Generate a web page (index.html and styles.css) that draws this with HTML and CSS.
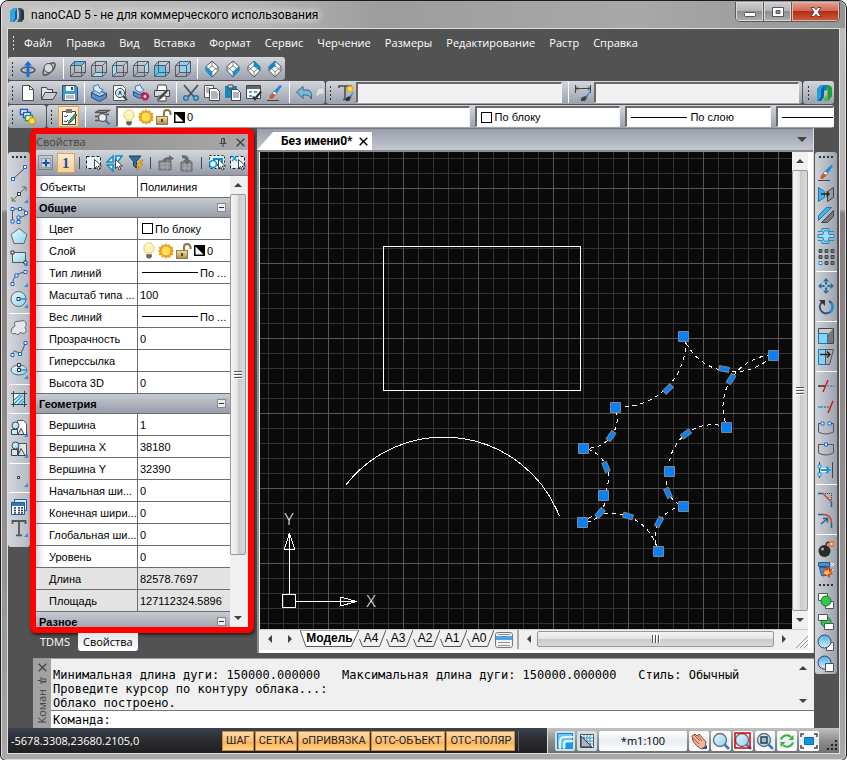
FILE: index.html
```html
<!DOCTYPE html>
<html lang="ru">
<head>
<meta charset="utf-8">
<title>nanoCAD 5 - не для коммерческого использования</title>
<link rel="stylesheet" href="styles.css">
</head>
<body>
<svg class="defs" aria-hidden="true">
  <defs>
    <linearGradient id="sky" x1="0" y1="0" x2="1" y2="1"><stop offset="0" stop-color="#e8f7fd"/><stop offset="1" stop-color="#8fd3f0"/></linearGradient>
    <linearGradient id="ball" x1="0" y1="0" x2="0" y2="1"><stop offset="0" stop-color="#49b1e8"/><stop offset="1" stop-color="#d4f0fc"/></linearGradient>
    <linearGradient id="gold" x1="0" y1="0" x2="0" y2="1"><stop offset="0" stop-color="#f3dfb4"/><stop offset="1" stop-color="#a98a4e"/></linearGradient>
  </defs>
  <symbol id="cube" viewBox="0 0 18 18"><path d="M1.500 5.500h11v11h-11zM5.500 1.500h11v11h-11zM1.500 5.500l4-4M12.500 5.500l4-4M12.500 16.500l4-4M1.500 16.500l4-4" fill="none" stroke="#555c63"/></symbol>
  <symbol id="gem" viewBox="0 0 18 18"><path d="M9 1l6 5.500v4L9 17l-6-6.500v-4z" fill="#fff" stroke="#555" stroke-width="1"/><path d="M3 6.500l6 5.500 6-5.500M9 12v5M9 1v5M9 6l-6 4.500M9 6l6 4.500" fill="none" stroke="#666" stroke-width=".8"/></symbol>
  <symbol id="bulb" viewBox="0 0 14 18"><circle cx="7" cy="6.500" r="5.500" fill="#fff3b0" stroke="#e9c66b"/><path d="M4 11h6v2H4z" fill="#f5e09a"/><path d="M4 13h6v3l-2 1.500H6L4 16z" fill="#666"/><path d="M5 4q2-2 3 0" stroke="#fff" fill="none" stroke-width="2"/></symbol>
  <symbol id="sun" viewBox="0 0 16 16"><path d="M8 0l1.600 2.200L12 1.200l.6 2.600 2.700.2-.8 2.500L16 8l-1.500 1.600.8 2.500-2.700.3-.6 2.500-2.400-1L8 16l-1.600-2.200-2.400 1-.6-2.500-2.700-.2.800-2.500L0 8l1.500-1.600L.7 4l2.700-.2.600-2.600 2.400 1z" fill="#e9a21b"/><circle cx="8" cy="8" r="5" fill="#ffdf57" stroke="#e8a020"/></symbol>
  <symbol id="lock" viewBox="0 0 16 16"><path d="M8 7V4q0-3 3-3t3.500 3v2" fill="none" stroke="#8a7443" stroke-width="2"/><rect x=".5" y="7.500" width="11" height="8" fill="url(#gold)" stroke="#9a7c40"/><path d="M6 10v3" stroke="#5a4520" stroke-width="2"/></symbol>
  <symbol id="swatch" viewBox="0 0 11 11"><path d="M0 0h11v11H0z" fill="#000"/><path d="M1.500 1.500v8h8z" fill="#fff"/></symbol>
  <symbol id="lens" viewBox="0 0 18 18"><path d="M12 12l5 5" stroke="#2d7fc4" stroke-width="2.500"/><circle cx="8" cy="8" r="6.500" fill="url(#sky)" stroke="#68727c" stroke-width="1.400"/></symbol>
  <symbol id="brush" viewBox="0 0 18 18"><path d="M16 2l-5 7-3-2 6-6z" fill="#1f8be0"/><path d="M8 7l3 2-1.500 2.500-3.500-2z" fill="#fff" stroke="#778"/><path d="M6 9.500l3.500 2L6 15l-3-.5 1-3z" fill="#c9602c"/><path d="M1 16.500h12" stroke="#444"/></symbol>
  <symbol id="cursor" viewBox="0 0 8 12"><path d="M.5.500v9l2.200-2 1.500 3.500 1.600-.7-1.500-3.300H7.500z" fill="#fff" stroke="#333" stroke-width=".9"/></symbol>
  <symbol id="pin" viewBox="0 0 8 9"><path d="M2.500 5V.500h3V5M5 1v4M.5 5.500h7M4 6v3" fill="none" stroke="currentColor"/></symbol>
  <symbol id="cross" viewBox="0 0 9 9"><path d="M.7.700l7.600 7.600M8.300.700L.7 8.300" stroke="currentColor" stroke-width="1.400"/></symbol>
  <symbol id="more" viewBox="0 0 4 4"><path d="M4 0v4H0z" fill="#2b8be8"/></symbol>
</svg>

<div class="window">
  <header class="titlebar">
    <svg class="logo" viewBox="0 0 16 16"><path d="M1 4l4-3h3v11l-3 3H1z" fill="#0c5fae"/><path d="M1 4l4-3h3L6 5v7l-2 3H1z" fill="#2fa6df"/><path d="M9 1h3q3 1 3 4v7l-3 3H8l2-4V5z" fill="#47525b"/><path d="M12 2q3 1 3 3v7l-3 3z" fill="#2c343a"/></svg>
    <h1>nanoCAD 5 - не для коммерческого использования</h1>
    <div class="winbtns">
      <button aria-label="Свернуть"><svg viewBox="0 0 14 12"><rect x="1.500" y="6.500" width="11" height="4" rx="1" fill="#fff" stroke="#545663"/></svg></button>
      <button aria-label="Развернуть"><svg viewBox="0 0 14 12"><path d="M1.500 1.500h11v9h-11zM5 4.500v3h4v-3z" fill="#fff" fill-rule="evenodd" stroke="#545663"/></svg></button>
      <button class="close" aria-label="Закрыть"><svg viewBox="0 0 14 12"><path d="M2 1.500h3.200L7 3.800l1.800-2.300H12L9 6l3 4.500H8.800L7 8.200l-1.800 2.300H2L5 6z" fill="#fff" stroke="#5b3a3e" stroke-width=".9"/></svg></button>
    </div>
  </header>

  <div class="app">
    <nav class="menu">
      <span class="grip"></span>
      <a href="#">Файл</a><a href="#">Правка</a><a href="#">Вид</a><a href="#">Вставка</a><a href="#">Формат</a><a href="#">Сервис</a><a href="#">Черчение</a><a href="#">Размеры</a><a href="#">Редактирование</a><a href="#">Растр</a><a href="#">Справка</a>
    </nav>

    <div class="bars">
      <div class="barrow">
        <div class="bar">
          <span class="grip"></span>
          <button aria-label="Орбита"><svg viewBox="0 0 18 18"><ellipse cx="9" cy="10" rx="7" ry="3" fill="none" stroke="#555" stroke-width="1.500"/><path d="M9 1l4 4.500h-2.500V14H7.500V5.500H5z" fill="#1c6fd6"/><path d="M7.500 14h3v3h-3z" fill="#1c6fd6"/></svg></button>
          <button aria-label="Вращение"><svg viewBox="0 0 18 18"><ellipse cx="9" cy="9" rx="8" ry="3.500" transform="rotate(-45 9 9)" fill="none" stroke="#555" stroke-width="1.500"/><circle cx="8.500" cy="8" r="4.500" fill="#d5dade" stroke="#444"/></svg></button>
          <i class="sep"></i>
          <button aria-label="Сверху"><svg viewBox="0 0 18 18"><path d="M1.500 5.500l4-4h11l-4 4z" fill="#5bbdf0"/><use href="#cube"/></svg></button>
          <button aria-label="Снизу"><svg viewBox="0 0 18 18"><path d="M1.500 16.500l4-4h11l-4 4z" fill="#a5dcf5"/><use href="#cube"/></svg></button>
          <button aria-label="Слева"><svg viewBox="0 0 18 18"><path d="M1.500 5.500l4-4v11l-4 4z" fill="#a5dcf5"/><use href="#cube"/></svg></button>
          <button aria-label="Справа"><svg viewBox="0 0 18 18"><path d="M12.500 5.500l4-4v11l-4 4z" fill="#a5dcf5"/><use href="#cube"/></svg></button>
          <button aria-label="Спереди"><svg viewBox="0 0 18 18"><path d="M1.500 5.500h11v11h-11z" fill="#5bc4f3"/><use href="#cube"/></svg></button>
          <button aria-label="Сзади"><svg viewBox="0 0 18 18"><path d="M5.500 1.500h11v11h-11z" fill="#8fd0f0"/><use href="#cube"/></svg></button>
          <i class="sep"></i>
          <button aria-label="ЮЗ изометрия"><svg viewBox="0 0 18 18"><use href="#gem"/><path d="M3 6.500L9 12v5l-6-6.500z" fill="#0a9bdc"/></svg></button>
          <button aria-label="ЮВ изометрия"><svg viewBox="0 0 18 18"><use href="#gem"/><path d="M15 6.500L9 12v5l6-6.500z" fill="#0a9bdc"/></svg></button>
          <button aria-label="СВ изометрия"><svg viewBox="0 0 18 18"><use href="#gem"/><path d="M9 1l6 5.500v4L9 6z" fill="#0a8bd0"/></svg></button>
          <button aria-label="СЗ изометрия"><svg viewBox="0 0 18 18"><use href="#gem"/><path d="M9 1L3 6.500v4L9 6z" fill="#0a8bd0"/></svg></button>
        </div>
      </div>

      <div class="barrow">
        <div class="bar">
          <span class="grip"></span>
          <button aria-label="Новый"><svg viewBox="0 0 18 18"><path d="M3.500 1.500h7l4 4v11h-11z" fill="#fff" stroke="#4a4f55"/><path d="M10.500 1.500v4h4" fill="none" stroke="#4a4f55"/></svg></button>
          <button aria-label="Открыть"><svg viewBox="0 0 18 18"><path d="M1.500 15V3.500h5l1 2h5V8" fill="#e3e6e9" stroke="#444"/><path d="M1.500 15.500l3.500-7h12l-4 7z" fill="#c8ccd0" stroke="#444"/></svg></button>
          <button aria-label="Сохранить"><svg viewBox="0 0 18 18"><path d="M1.500 1.500h13l2 2v13h-15z" fill="#3d9bd0" stroke="#3a4a58"/><path d="M5 2h8v5H5z" fill="#fff"/><path d="M10 3h2v3h-2z" fill="#345"/><path d="M4 10h10v6H4z" fill="#fff"/><path d="M5 12h8M5 14h8" stroke="#777"/></svg></button>
          <i class="sep"></i>
          <button aria-label="Печать"><svg viewBox="0 0 18 18"><path d="M1.500 8.500l8 4 7-3v4l-7 4-8-4z" fill="#5c8fd0" stroke="#2b4a78"/><path d="M1.500 8.500l5-3 10 4-7 3z" fill="#b3cdef" stroke="#2b4a78"/><path d="M4 6.500L3 2.500l5-2 2 4 3 1-3 4z" fill="#dbe8f8" stroke="#3f74bd"/></svg></button>
          <button aria-label="Просмотр"><svg viewBox="0 0 18 18"><path d="M2.500 1.500h9l3 3v12h-12z" fill="#fff" stroke="#555"/><circle cx="9" cy="9" r="4.500" fill="#cfeefa" stroke="#444"/><path d="M7.500 11L9 7l1.500 4" fill="none" stroke="#235"/><path d="M12 12l4 4" stroke="#444" stroke-width="2"/></svg></button>
          <button aria-label="Параметры печати"><svg viewBox="0 0 18 18"><path d="M1.500 7.500l6 3 5-2v3l-5 3-6-3z" fill="#5c8fd0" stroke="#2b4a78"/><path d="M4 6.500L3 2.500l5-2 2 4 2 1-3 3z" fill="#dbe8f8" stroke="#3f74bd"/><circle cx="13" cy="12.500" r="3" fill="#f4c9d6" stroke="#b5103f" stroke-width="2.500" stroke-dasharray="1.500 .9"/><circle cx="13" cy="12.500" r="2.500" fill="none" stroke="#c2184a" stroke-width="1.500"/></svg></button>
          <button aria-label="Пакетная печать"><svg viewBox="0 0 18 18"><path d="M4 6l1-5h8l1 5" fill="#fff" stroke="#444"/><path d="M1.500 6.500h15v6h-15z" fill="#d7dbe0" stroke="#444"/><path d="M5 12h8v5H5z" fill="#fff" stroke="#444"/><path d="M15 7l-6 7-4 3 1-4 7-7z" fill="#444"/></svg></button>
          <i class="sep"></i>
          <button aria-label="Вырезать"><svg viewBox="0 0 18 18"><path d="M2 1l10 12M16 1L6 13" stroke="#4b5157" stroke-width="1.700"/><circle cx="4" cy="14" r="2.300" fill="none" stroke="#0b84b8" stroke-width="1.500"/><circle cx="14" cy="14" r="2.300" fill="none" stroke="#0b84b8" stroke-width="1.500"/></svg></button>
          <button aria-label="Копировать"><svg viewBox="0 0 18 18"><path d="M1.500 1.500h9v12h-9z" fill="#fff" stroke="#555"/><path d="M6.500 4.500h7l3 3v9h-10z" fill="#fff" stroke="#444"/><path d="M3 4h3M3 6h3M3 8h3M8 8h6M8 10h7M8 12h7M8 14h7" stroke="#667"/></svg></button>
          <button aria-label="Вставить"><svg viewBox="0 0 18 18"><path d="M1 2h12v12H1z" fill="#1389bd"/><path d="M4 1h5v3H4z" fill="#d8dde2" stroke="#444"/><path d="M7.500 5.500h6l3 3v8h-9z" fill="#fff" stroke="#444"/><path d="M9 9h6M9 11h6M9 13h6" stroke="#667"/></svg></button>
          <button aria-label="Свойства"><svg viewBox="0 0 18 18"><path d="M1.500 1.500h14v13h-14z" fill="#fff" stroke="#444"/><path d="M2 2h13v3H2z" fill="#666"/><path d="M4 7h3v2H4zM9 7h3v2H9zM4 11h3v2H4z" fill="#4ba6d8"/><path d="M17 8l-4 5-3 4-3-4 2-1 1 1 5-6z" fill="#333"/></svg></button>
          <button aria-label="Копия свойств"><svg viewBox="0 0 18 18"><use href="#brush"/></svg></button>
          <i class="sep"></i>
          <button aria-label="Отменить"><svg viewBox="0 0 18 18"><path d="M1.500 8L8 2.500V6h4q4.500 0 4.500 6v3q-2-4-5-4H8v3.500z" fill="#78b8da" stroke="#336684"/></svg></button>
          <span class="clip"><svg viewBox="0 0 10 18"><path d="M10 4H5Q2 6 2 13l4-3h4z" fill="#dfe1e4" stroke="#b4b8be"/></svg></span>
        </div>
        <div class="bar grow">
          <span class="grip"></span>
          <button aria-label="Стиль текста"><svg viewBox="0 0 18 18"><path d="M2 4V2h12v2M8 2v13M6 15.500h4" fill="none" stroke="#4b4b4b" stroke-width="1.500"/><use href="#sun" x="9" y="1" width="8" height="8"/><path d="M17 7l-3 7-2-1z" fill="#1f8be0"/><path d="M14 14l-2-2-3 2v3h3z" fill="#333"/></svg></button>
          <select class="combo off" aria-label="Стиль текста"></select>
          <i class="sep"></i>
          <button aria-label="Размерный стиль"><svg viewBox="0 0 18 18"><path d="M1.500 1v8M16.500 1v8M2 4.500h14M4 2.500L2 4.500l2 2M14 2.500l2 2-2 2" fill="none" stroke="#444"/><path d="M17 6l-4 8-2-1z" fill="#1f8be0"/><path d="M13 14l-2-2-4 2v3h4z" fill="#444"/></svg></button>
          <select class="combo off" aria-label="Размерный стиль"></select>
        </div>
        <div class="bar end">
          <span class="grip"></span>
          <button aria-label="nanoCAD"><svg viewBox="0 0 18 18"><path d="M2 5l4-4h3v12l-3 4H2z" fill="#0b5fae"/><path d="M2 5l4-4h3L6 6v7l-3 4H2z" fill="#1ea0e0"/><path d="M9 1h4q4 1 4 4v7l-4 5H8l2-4q2 0 2-3V6z" fill="#4cc24a"/><path d="M13 1q4 1 4 4v7l-4 5z" fill="#249a3c"/><path d="M9 1h4l-1 5-3 1z" fill="#12869c"/></svg></button>
        </div>
      </div>

      <div class="barrow">
        <div class="bar">
          <span class="grip"></span>
          <button aria-label="Слои"><svg viewBox="0 0 18 18"><path d="M1.500 1.500h7v5h-7z" fill="#fff" stroke="#2255c8" stroke-width="1.400"/><path d="M4.500 4.500h7v5h-7z" fill="#fff" stroke="#2255c8" stroke-width="1.400"/><path d="M6.500 7.500h7v5h-7z" fill="#fff" stroke="#26a02c" stroke-width="1.400"/><circle cx="13" cy="13" r="3.500" fill="#ffd83b" stroke="#b58a10"/></svg></button>
          <i class="sep blank"></i>
        </div>
        <div class="bar grow layer">
          <span class="grip"></span>
          <button class="on" aria-label="Панель свойств"><svg viewBox="0 0 18 18"><path d="M2.500 3.500h13v13h-13z" fill="#fff" stroke="#444"/><path d="M6 1h6v4H6z" fill="#777"/><path d="M4 8l2 1 2-2M4 13l2 1 2-2" fill="none" stroke="#246"/><path d="M17 7l-6 7-2.500 1.500L9 13l6-7z" fill="#46b34a" stroke="#356"/></svg></button>
          <i class="sep"></i>
          <button aria-label="Поиск слоя"><svg viewBox="0 0 18 18"><path d="M6 2.500h10l-3 2H2zM2 8.500h4M2 12.500h4M13 6.500h3" fill="none" stroke="#555" stroke-width="1.300"/><circle cx="9.500" cy="9.500" r="4" fill="#e7edf2" stroke="#555" stroke-width="1.300"/><path d="M12.500 12.500l4 4" stroke="#2d7fc4" stroke-width="2.200"/></svg></button>
          <label class="combo wide"><svg class="i-bulb"><use href="#bulb"/></svg><svg class="i-sun"><use href="#sun"/></svg><svg class="i-sun"><use href="#lock"/></svg><svg class="i-sw"><use href="#swatch"/></svg><select aria-label="Слой"><option>0</option></select></label>
          <label class="combo mid"><i class="box"></i><select aria-label="Цвет"><option>По блоку</option></select></label>
          <label class="combo mid"><i class="line"></i><select aria-label="Тип линий"><option>По слою</option></select></label>
          <label class="combo tail"><i class="line"></i></label>
        </div>
      </div>
    </div>

    <main class="work">
      <aside class="tools left" aria-label="Рисование">
        <span class="grip h"></span>
        <button aria-label="Отрезок"><svg viewBox="0 0 18 18"><path d="M3 15L16 3" stroke="#444"/><path d="M1.500 13.500h3v3h-3zM13.500 1.500h3v3h-3z" fill="#fff" stroke="#1464d8"/></svg></button>
        <button aria-label="Луч"><svg viewBox="0 0 18 18"><path d="M2 16L16 2M2 12v4h4M12 2h4v4" fill="none" stroke="#666"/><path d="M7.500 7.500h3v3h-3z" fill="#fff" stroke="#333"/><use href="#more" x="14" y="14" width="4" height="4"/></svg></button>
        <button aria-label="Полилиния"><svg viewBox="0 0 18 18"><path d="M2.500 15V3h9q5 1 5 4t-5 4H8v4" fill="none" stroke="#555"/><path d="M1 1.500h3v3H1zM8.500 1.500h3v3h-3zM14.500 5.500h3v3h-3zM7 10h3v3H7zM1 14h3v3H1zM7 14.500h3v3H7z" fill="#fff" stroke="#1464d8"/></svg></button>
        <button aria-label="Многоугольник"><svg viewBox="0 0 18 18"><path d="M9 1.500l8 6-3 9H4l-3-9z" fill="url(#sky)" stroke="#666"/></svg></button>
        <button aria-label="Прямоугольник"><svg viewBox="0 0 18 18"><path d="M2.500 4.500h13v10h-13z" fill="url(#sky)" stroke="#555"/><path d="M1 3h3v3H1zM14 13h3v3h-3z" fill="#fff" stroke="#333"/><use href="#more" x="14" y="14" width="4" height="4"/></svg></button>
        <button aria-label="Дуга"><svg viewBox="0 0 18 18"><path d="M2.500 15Q3 4 16 3" fill="none" stroke="#555"/><path d="M1 13.500h3v3H1zM5 5h3v3H5zM14 1.500h3v3h-3z" fill="#fff" stroke="#1464d8"/><use href="#more" x="14" y="14" width="4" height="4"/></svg></button>
        <button aria-label="Окружность"><svg viewBox="0 0 18 18"><circle cx="8.500" cy="9" r="7.500" fill="url(#sky)" stroke="#666"/><path d="M9 9h7" stroke="#079bd8" stroke-width="1.500"/><path d="M7 7.500h3v3H7z" fill="#fff" stroke="#333"/><use href="#more" x="14" y="14" width="4" height="4"/></svg></button>
        <i class="sep h"></i>
        <button aria-label="Облако"><svg viewBox="0 0 18 18"><path d="M5 7Q3 1.500 8 2.500q6-2 8 1 1 3-1 5 3 5-2 6-2-1-3-1-2 4-4 1-5 1-5-2 0-4 4-5.500z" fill="#e4e8ec" stroke="#666"/></svg></button>
        <button aria-label="Сплайн"><svg viewBox="0 0 18 18"><path d="M3 15q0-6 4-3t6-3 3-6" fill="none" stroke="#555"/><path d="M1 13.500h3v3H1zM8.500 12.500h3v3h-3zM14 1.500h3v3h-3z" fill="#fff" stroke="#1464d8"/></svg></button>
        <button aria-label="Эллипс"><svg viewBox="0 0 18 18"><ellipse cx="9" cy="9" rx="8" ry="5" fill="url(#sky)" stroke="#666"/><path d="M9 4v5h7" fill="none" stroke="#079bd8" stroke-width="1.400"/><path d="M7.500 7.500h3v3h-3zM7.500 2.500h3v3h-3z" fill="#fff" stroke="#333"/><use href="#more" x="14" y="14" width="4" height="4"/></svg></button>
        <i class="sep h"></i>
        <button aria-label="Штриховка"><svg viewBox="0 0 18 18"><path d="M4 4h4q6 3 6 10H4z" fill="#fff"/><path d="M4 10l6-5M4 14l8-8M8 14l5-5M11 14l3-3" stroke="#0a9bdc" stroke-width="1.300"/><path d="M1 3.500h16M1 14.500h16M3.500 1v16M14.500 1v16" stroke="#444"/></svg></button>
        <i class="sep h"></i>
        <button aria-label="Вставка блока"><svg viewBox="0 0 18 18"><path d="M7.500 1.500h6l3 3v11h-9z" fill="#fff" stroke="#555"/><circle cx="5.500" cy="6.500" r="3.500" fill="url(#sky)" stroke="#444"/><path d="M1.500 10.500h6v5h-6zM8 15.500l3-6 3 6z" fill="#cdeafa" stroke="#444"/><use href="#more" x="14" y="14" width="4" height="4"/></svg></button>
        <button aria-label="Создать блок"><svg viewBox="0 0 18 18"><path d="M8.500 3.500h8v12h-8z" fill="#dfe6ec" stroke="#555"/><circle cx="5.500" cy="5.500" r="3.500" fill="url(#sky)" stroke="#444"/><path d="M1.500 9.500h6v6h-6zM8 15.500l3-7 4 7z" fill="#cdeafa" stroke="#444"/><use href="#more" x="14" y="14" width="4" height="4"/></svg></button>
        <i class="sep h"></i>
        <button aria-label="Точка"><svg viewBox="0 0 18 18"><path d="M7.500 7.500h2v2h-2z" fill="#fff" stroke="#333"/><use href="#more" x="14" y="14" width="4" height="4"/></svg></button>
        <i class="sep h"></i>
        <button aria-label="Таблица"><svg viewBox="0 0 18 18"><path d="M4.500 1.500h12v11h-12z" fill="#dceaf7" stroke="#245c96"/><path d="M1.500 4.500h13v12h-13z" fill="#fff" stroke="#245c96"/><path d="M2 5h12v3H2z" fill="#2f78ba"/><path d="M4 10h2M8 10h2M11 10h2M4 12.500h2M8 12.500h2M11 12.500h2M4 15h2M8 15h2M11 15h2" stroke="#234" stroke-width="1.500"/></svg></button>
        <button aria-label="Текст"><svg viewBox="0 0 18 18"><path d="M2.500 5V2h13v3M9 2v14M6 16.300h6" fill="none" stroke="#555" stroke-width="1.800"/><use href="#more" x="14" y="14" width="4" height="4"/></svg></button>
      </aside>

      <div class="center">
        <div class="docks">
          <div class="dock">
            <section class="props">
              <header><h2>Свойства</h2><svg class="i-pin"><use href="#pin"/></svg><svg class="i-x"><use href="#cross"/></svg></header>
              <div class="ptools">
                <button aria-label="Добавить"><svg viewBox="0 0 18 18"><path d="M1.500 1.500h14v14h-14z" fill="none" stroke="#555" stroke-dasharray="1 1"/><path d="M4.500 4.500h9v9h-9z" fill="#c5d4e8" stroke="#777" stroke-dasharray="1 1"/><path d="M9 5.500v7M5.500 9h7" stroke="#1a4f9a" stroke-width="2"/></svg></button>
                <button class="on num" aria-label="Один">1</button>
                <i class="bsep"></i>
                <button aria-label="Выбор"><svg viewBox="0 0 18 18"><path d="M1.500 2.500h14v12h-14z" fill="#e5f3fb" stroke="#222" stroke-dasharray="3 2"/><use href="#cursor" x="9" y="5" width="8" height="12"/></svg></button>
                <button aria-label="Быстрый выбор"><svg viewBox="0 0 18 18"><path d="M1 8l6-6v6zM10 2h6l-6 8zM1 11h6v6z" fill="#e5f3fb" stroke="#0d8fcb" stroke-width="1.500"/><use href="#cursor" x="9" y="5" width="8" height="12"/></svg></button>
                <button aria-label="Фильтр"><svg viewBox="0 0 18 18"><path d="M2 2h12L9.500 7.500V14l-3-2V7.500z" fill="#2c6ca6" stroke="#244"/><path d="M14 6l-5 6h3l-2 5 6-7h-3l3-4z" fill="#ffb21c" stroke="#b56d00" stroke-width=".6"/></svg></button>
                <i class="bsep"></i>
                <button aria-label="Экспорт"><svg viewBox="0 0 18 18"><path d="M2 7h12v9H2z" fill="#8a8d90" stroke="#666"/><path d="M3 10h10M3 13h10M6 8v8M10 8v8" stroke="#aaa"/><path d="M5 8q1-5 7-5V1l5 3.500L12 8V6Q9 6 8 8z" fill="#6c6f72"/></svg></button>
                <button aria-label="Импорт"><svg viewBox="0 0 18 18"><path d="M3 8h11v9H3z" fill="#8a8d90" stroke="#666"/><path d="M4 11h9M4 14h9M7 9v8M11 9v8" stroke="#aaa"/><path d="M4 1q7 0 7 5h2l-4 5-4-5h2q0-2-3-2z" fill="#6c6f72"/></svg></button>
                <i class="bsep"></i>
                <button aria-label="Выбрать объекты"><svg viewBox="0 0 18 18"><path d="M1.500 1.500h15v13h-15z" fill="#e5f3fb" stroke="#222" stroke-dasharray="2 2"/><path d="M6 5h8v6H6z" fill="none" stroke="#0d8fcb" stroke-width="2"/><circle cx="5" cy="10" r="3.500" fill="#dff3fc" stroke="#0d8fcb" stroke-width="1.500"/><use href="#cursor" x="10" y="5" width="8" height="12"/></svg></button>
                <button aria-label="Снять выбор"><svg viewBox="0 0 18 18"><path d="M1.500 2.500h14v12h-14z" fill="#e5f3fb" stroke="#222" stroke-dasharray="3 2"/><path d="M3 2l5 5M8 2L3 7" stroke="#0d8fcb" stroke-width="1.300"/><use href="#cursor" x="9" y="5" width="8" height="12"/></svg></button>
              </div>
              <div class="pbody">
                <div class="pview">
                  <table>
                    <colgroup><col class="c-name"><col></colgroup>
                    <tbody>
                      <tr class="obj"><th scope="row">Объекты</th><td>Полилиния</td></tr>
                      <tr class="grp"><th colspan="2" scope="rowgroup"><div>Общие<button aria-label="Свернуть группу"></button></div></th></tr>
                      <tr><th scope="row">Цвет</th><td><div class="cell"><i class="box"></i>По блоку</div></td></tr>
                      <tr><th scope="row">Слой</th><td><div class="cell"><svg class="i-bulb"><use href="#bulb"/></svg><svg class="i-sun"><use href="#sun"/></svg><svg class="i-sun"><use href="#lock"/></svg><svg class="i-sw"><use href="#swatch"/></svg>0</div></td></tr>
                      <tr><th scope="row">Тип линий</th><td><div class="cell"><i class="line"></i>По ...</div></td></tr>
                      <tr><th scope="row">Масштаб типа ...</th><td>100</td></tr>
                      <tr><th scope="row">Вес линий</th><td><div class="cell"><i class="line"></i>По ...</div></td></tr>
                      <tr><th scope="row">Прозрачность</th><td>0</td></tr>
                      <tr><th scope="row">Гиперссылка</th><td></td></tr>
                      <tr><th scope="row">Высота 3D</th><td>0</td></tr>
                      <tr class="grp"><th colspan="2" scope="rowgroup"><div>Геометрия<button aria-label="Свернуть группу"></button></div></th></tr>
                      <tr><th scope="row">Вершина</th><td>1</td></tr>
                      <tr><th scope="row">Вершина X</th><td>38180</td></tr>
                      <tr><th scope="row">Вершина Y</th><td>32390</td></tr>
                      <tr><th scope="row">Начальная ши...</th><td>0</td></tr>
                      <tr><th scope="row">Конечная шири...</th><td>0</td></tr>
                      <tr><th scope="row">Глобальная ши...</th><td>0</td></tr>
                      <tr><th scope="row">Уровень</th><td>0</td></tr>
                      <tr class="ro"><th scope="row">Длина</th><td>82578.7697</td></tr>
                      <tr class="ro"><th scope="row">Площадь</th><td>127112324.5896</td></tr>
                      <tr class="grp"><th colspan="2" scope="rowgroup"><div>Разное<button aria-label="Свернуть группу"></button></div></th></tr>
                    </tbody>
                  </table>
                </div>
                <div class="scroll v"><i class="arr up"></i><div class="track"><div class="thumb short"><i class="ridge"></i></div></div><i class="arr down"></i></div>
              </div>
            </section>
            <nav class="dtabs"><a href="#">TDMS</a><a href="#" class="cur">Свойства</a></nav>
          </div>

          <section class="mdi">
            <div class="mtabs"><span class="mtab">Без имени0* <svg class="i-x"><use href="#cross"/></svg></span><i class="drop"></i></div>
            <div class="doc">
              <div class="view">
                <div class="canvas">
                  <svg class="drawing" viewBox="260 152 533 477" width="533" height="477">
                    <g fill="none" stroke="#fff" shape-rendering="crispEdges">
                      <rect x="383.500" y="246.500" width="197" height="144"/>
                      <path d="M345.500 485.500A124 124 0 0 1 559.500 516.500"/>
                      <path d="M282.500 594.500h13v13h-13zM289.500 594V533l-5 16h10l-5-16M296 601.500h61l-17-4.500v9l17-4.500"/>
                      <path stroke-dasharray="4 4" d="M686 340A66 66 0 0 1 615 407M683 336A54 54 0 0 0 773 355A52 52 0 0 0 727 427M727 427A44 44 0 0 0 669 471A25 25 0 0 0 683 506A32 32 0 0 0 658 551A49 49 0 0 0 582 522A20 20 0 0 0 603 495A30 30 0 0 0 583 448A30 30 0 0 0 615 407"/>
                    </g>
                    <g fill="#fff" font-family="Open Sans, sans-serif" font-weight="300" font-size="17" text-anchor="middle"><text x="289" y="525">Y</text><text x="371" y="607">X</text></g>
                    <g fill="#0a80f8" stroke="#7d8790">
                      <path d="M678.500 331.500h10v10h-10zM768.500 350.500h10v10h-10zM610.500 402.500h10v10h-10zM721.500 422.500h10v10h-10zM578.500 443.500h10v10h-10zM664.500 466.500h10v10h-10zM598.500 490.500h10v10h-10zM678.500 501.500h10v10h-10zM577.500 517.500h10v10h-10zM653.500 546.500h10v10h-10z"/>
                      <rect x="-5" y="-2.500" width="10" height="5" transform="translate(668 389) rotate(-45)"/>
                      <rect x="-5" y="-2.500" width="10" height="5" transform="translate(724 369) rotate(10)"/>
                      <rect x="-5" y="-2.500" width="10" height="5" transform="translate(731 379) rotate(-58)"/>
                      <rect x="-5" y="-2.500" width="10" height="5" transform="translate(611 436) rotate(-55)"/>
                      <rect x="-5" y="-2.500" width="10" height="5" transform="translate(686 434) rotate(-36)"/>
                      <rect x="-5" y="-2.500" width="10" height="5" transform="translate(606 467) rotate(68)"/>
                      <rect x="-5" y="-2.500" width="10" height="5" transform="translate(668 493) rotate(66)"/>
                      <rect x="-5" y="-2.500" width="10" height="5" transform="translate(600 513) rotate(-50)"/>
                      <rect x="-5" y="-2.500" width="10" height="5" transform="translate(628 516) rotate(18)"/>
                      <rect x="-5" y="-2.500" width="10" height="5" transform="translate(659 522) rotate(-62)"/>
                    </g>
                  </svg>
                </div>
                <div class="scroll v"><i class="arr up"></i><div class="track"><div class="thumb"><i class="ridge"></i></div></div><i class="arr down"></i></div>
              </div>
              <div class="sheets">
                <i class="arr lt"></i><i class="arr rt"></i>
                <nav>
                  <a href="#" class="cur"><svg viewBox="0 0 60 17" preserveAspectRatio="none"><path d="M0 0l6 16.500h46L60 0z" fill="#fff" stroke="#555"/></svg><span>Модель</span></a>
                  <a href="#"><svg viewBox="0 0 30 17" preserveAspectRatio="none"><path d="M3.500 9l3 7.500h17L30 0" fill="none" stroke="#555"/></svg><span>A4</span></a>
                  <a href="#"><svg viewBox="0 0 30 17" preserveAspectRatio="none"><path d="M3.500 9l3 7.500h17L30 0" fill="none" stroke="#555"/></svg><span>A3</span></a>
                  <a href="#"><svg viewBox="0 0 30 17" preserveAspectRatio="none"><path d="M3.500 9l3 7.500h17L30 0" fill="none" stroke="#555"/></svg><span>A2</span></a>
                  <a href="#"><svg viewBox="0 0 30 17" preserveAspectRatio="none"><path d="M3.500 9l3 7.500h17L30 0" fill="none" stroke="#555"/></svg><span>A1</span></a>
                  <a href="#"><svg viewBox="0 0 30 17" preserveAspectRatio="none"><path d="M3.500 9l3 7.500h17L30 0" fill="none" stroke="#555"/></svg><span>A0</span></a>
                </nav>
                <button class="list" aria-label="Список листов"><svg viewBox="0 0 18 16"><rect x=".5" y=".5" width="17" height="15" rx="2" fill="#eef1f4" stroke="#777"/><path d="M1 4h16v4H1z" fill="#4ea4e4"/><path d="M3 2.500h12M3 10.500h12M3 13.500h12" stroke="#999"/></svg></button>
                <div class="scroll h"><i class="arr lt"></i><div class="track"><div class="thumb"><i class="ridge"></i></div></div><i class="arr rt"></i></div>
                <svg class="sizer" viewBox="0 0 12 12"><path d="M0 12L12 0M4 12l8-8M8 12l4-4" stroke="#999"/></svg>
              </div>
            </div>
          </section>
        </div>

        <section class="console">
          <div class="side"><svg class="i-x"><use href="#cross"/></svg><svg class="i-pin turn"><use href="#pin"/></svg><span>Коман</span></div>
          <div class="cbody">
            <div class="log">
              <pre>Минимальная длина дуги: 150000.000000   Максимальная длина дуги: 150000.000000   Стиль: Обычный
Проведите курсор по контуру облака...:
Облако построено.</pre>
              <div class="scroll v"><i class="arr up"></i><div class="track"></div><i class="arr down"></i></div>
            </div>
            <label class="cmd">Команда:<input type="text"></label>
          </div>
        </section>
      </div>

      <aside class="tools right" aria-label="Редактирование">
        <span class="grip h"></span>
        <button aria-label="Стереть"><svg viewBox="0 0 18 18"><use href="#brush"/></svg></button>
        <button aria-label="Зеркало"><svg viewBox="0 0 18 18"><path d="M1.500 2.500l6 4v6l-6 4z" fill="#41b4ea" stroke="#1779a8"/><path d="M10.500 6.500l6-4v10l-6 4z" fill="#999" stroke="#444"/><path d="M4 9h8M9.500 6.500L12 9l-2.500 2.500" fill="none" stroke="#222" stroke-width="1.300"/></svg></button>
        <button aria-label="Подобие"><svg viewBox="0 0 18 18"><path d="M1.500 9.500l8-8h5l-13 13z" fill="#41b4ea" stroke="#1779a8"/><path d="M4.500 16.500l12-12v6l-6 6z" fill="#777" stroke="#444"/></svg></button>
        <button aria-label="Контур"><svg viewBox="0 0 18 18"><path d="M1 4.500h4v-3h7v3h5M1 13.500h4v3h7v-3h5" fill="none" stroke="#0a8fce"/><path d="M1 7.500h5q0-4 3-4t3 4h5v3h-5q0 4-3 4t-3-4H1z" fill="#a4dcf5" stroke="#0a8fce"/></svg></button>
        <button aria-label="Массив"><svg viewBox="0 0 18 18"><path d="M2 1.500h3v3H2zM8 1.500h3v3H8zM14 1.500h3v3h-3zM2 7.500h3v3H2zM8 7.500h3v3H8zM14 7.500h3v3h-3zM8 13.500h3v3H8zM14 13.500h3v3h-3z" fill="#777" stroke="#444"/><path d="M2 13.500h3v3H2z" fill="#fff" stroke="#0a8fce"/></svg></button>
        <i class="sep h"></i>
        <button aria-label="Перенести"><svg viewBox="0 0 18 18"><path d="M9 1l3 3.500H6zM9 17l3-3.500H6zM1 9l3.500-3v6zM17 9l-3.500-3v6z" fill="#1f6aa0"/><path d="M9 5v2.500M9 10.500V13M5 9h2.500M10.500 9H13" stroke="#1f6aa0" stroke-width="2"/></svg></button>
        <button aria-label="Повернуть"><svg viewBox="0 0 18 18"><path d="M12 3a6.500 6.500 0 1 1-6.500.6" fill="none" stroke="#38546c" stroke-width="2"/><path d="M14 5a6.500 6.500 0 0 1-1 9" fill="none" stroke="#0a9bdc" stroke-width="2.400"/><path d="M2 2h6v6z" fill="#333"/></svg></button>
        <i class="sep h"></i>
        <button aria-label="Масштаб"><svg viewBox="0 0 18 18"><path d="M1.500 1.500h15v15h-15z" fill="#ccc" stroke="#444"/><path d="M16 2v14h-5V7z" fill="#777"/><path d="M1.500 6.500h9v10h-9z" fill="#84d2f5" stroke="#0a7fb8"/></svg></button>
        <button aria-label="Растянуть"><svg viewBox="0 0 18 18"><path d="M1.500 1.500h7v15h-7z" fill="#84d2f5" stroke="#0a7fb8"/><path d="M8.500 1.500h8l-4 15h-4z" fill="#a9adb1" stroke="#555"/><path d="M3 6.500h10M10 3.500l3 3-3 3" fill="none" stroke="#222" stroke-width="1.400"/></svg></button>
        <i class="sep h"></i>
        <button aria-label="Обрезать"><svg viewBox="0 0 18 18"><path d="M1 9h7" stroke="#222" stroke-width="1.400"/><path d="M10 9h7" stroke="#157ab4" stroke-dasharray="2 1"/><path d="M6 15l5-12" stroke="#d11" stroke-width="1.400"/></svg></button>
        <button aria-label="Удлинить"><svg viewBox="0 0 18 18"><path d="M1 9h5" stroke="#0a9bdc" stroke-width="1.400"/><path d="M7 9h6" stroke="#444" stroke-dasharray="2 1"/><path d="M11 15l5-12" stroke="#d11" stroke-width="1.400"/></svg></button>
        <button aria-label="Разорвать"><svg viewBox="0 0 18 18"><path d="M4 4.500H1.500V13q7 4 15 0V4.500H14" fill="none" stroke="#555"/><path d="M4 3h3v3H4zM11 3h3v3h-3z" fill="#fff" stroke="#1464d8"/></svg></button>
        <button aria-label="Разорвать в точке"><svg viewBox="0 0 18 18"><path d="M7 4.500H1.500V13q7 4 15 0V4.500H11" fill="none" stroke="#555"/><path d="M7.500 3h3v3h-3z" fill="#fff" stroke="#1464d8"/></svg></button>
        <button aria-label="Соединить"><svg viewBox="0 0 18 18"><path d="M2.500 1v16M15.500 1v16" stroke="#444"/><path d="M1 4h3v3H1zM1 12h3v3H1z" fill="#fff" stroke="#0a9bdc"/><path d="M4 9h9" stroke="#fff" stroke-width="4"/><path d="M4 9h8M9.500 6l3 3-3 3" fill="none" stroke="#0a9bdc" stroke-width="2"/></svg></button>
        <i class="sep h"></i>
        <button aria-label="Фаска"><svg viewBox="0 0 18 18"><path d="M1 3.500h5M14.500 12v5" stroke="#1f5f94" stroke-width="1.500"/><path d="M6 3.500l8.500 8.500" stroke="#d0402a" stroke-width="1.500"/><path d="M8 3.500h6.500V11" fill="none" stroke="#333" stroke-dasharray="1 1"/></svg></button>
        <button aria-label="Сопряжение"><svg viewBox="0 0 18 18"><path d="M1 3.500h5M14.500 12v5" stroke="#1f5f94" stroke-width="1.500"/><path d="M6 3.500q8.500 0 8.500 8.500" fill="none" stroke="#d0402a" stroke-width="1.500"/><path d="M4 13l6-5M6 7.500h4.500v4" fill="none" stroke="#1f5f94" stroke-width="1.500"/></svg></button>
        <i class="sep h"></i>
        <button aria-label="Разбить"><svg viewBox="0 0 18 18"><circle cx="7.500" cy="11" r="6" fill="#2b2b2b"/><circle cx="5.500" cy="9" r="1.500" fill="#aaa"/><path d="M9 5q1-4 4-2" fill="none" stroke="#333" stroke-width="1.500"/><circle cx="14.500" cy="4" r="3" fill="#f26a3c"/><circle cx="14.500" cy="4" r="1.300" fill="#ffe38a"/></svg></button>
        <button aria-label="Взорвать"><svg viewBox="0 0 18 18"><path d="M1.500 1.500h11v4h-11zM2.500 6.500h10v8h-8z" fill="#3f93cc" stroke="#245c86"/><path d="M6 6l2 2 3-3 1 4 4-2-2 4 2 2-3 1v3l-4-3-3 2 1-4-2-2 3-1z" fill="#e23b22"/><path d="M8 9l2 1 2-2 0 3 2 1-3 1-1 2-1-2-2 0z" fill="#ffd24a"/><path d="M14 2l3 3M17 2l-3 3M15.500 8v1" stroke="#fff"/></svg></button>
        <span class="grip h"></span>
        <button aria-label="На передний план"><svg viewBox="0 0 18 18"><path d="M1.500 1.500h9v7h-9zM8.500 9.500h8v7h-8z" fill="#fff" stroke="#555"/><circle cx="9" cy="9" r="5" fill="#2ec84a" stroke="#197a2c"/></svg></button>
        <button aria-label="На задний план"><svg viewBox="0 0 18 18"><circle cx="9" cy="9" r="5" fill="#2ec84a" stroke="#197a2c"/><path d="M1.500 1.500h9v6h-9zM7.500 10.500h9v6h-9z" fill="#fff" stroke="#555"/></svg></button>
        <button aria-label="Перед объектом"><svg viewBox="0 0 18 18"><path d="M9.500 8.500h7v8h-7z" fill="#fff" stroke="#555"/><circle cx="7.500" cy="7.500" r="6.500" fill="url(#ball)" stroke="#446"/></svg></button>
        <button aria-label="За объектом"><svg viewBox="0 0 18 18"><circle cx="7.500" cy="7.500" r="6.500" fill="url(#ball)" stroke="#446"/><path d="M8.500 8.500h8v8h-8z" fill="#fff" stroke="#555"/></svg></button>
      </aside>
    </main>

    <footer class="status">
      <output>-5678.3308,23680.2105,0</output>
      <div class="modes"><button>ШАГ</button><button>СЕТКА</button><button>оПРИВЯЗКА</button><button>ОТС-ОБЪЕКТ</button><button>ОТС-ПОЛЯР</button></div>
      <div class="viewbar">
        <button class="shade" aria-label="Вид"><svg viewBox="0 0 18 18"><path d="M1.500 1.500h15v15h-15z" fill="#6ec5ef" stroke="#1a84bd"/><path d="M4 17V9q0-4 5-4h8M8 17v-5q0-3 3-3h6" fill="none" stroke="#fff" stroke-width="1.500"/><path d="M10 17v-6h7v6z" fill="#189bdc"/></svg></button>
        <button class="shade" aria-label="Сетка"><svg viewBox="0 0 18 18"><path d="M2.500 2.500h13v13h-13z" fill="#fff" stroke="#555"/><path d="M6 3v12M9 3v12M12 3v12M3 6h12M3 9h12M3 12h12" stroke="#2c93cc"/><path d="M3 4l11 11H3z" fill="#aeb4ba" stroke="#333"/></svg></button>
        <button class="scale">*m1:100</button>
        <button aria-label="Панорама"><svg viewBox="0 0 18 18"><path d="M2 4l3-2 2 2 2-2 7 8-1 5-4 2Q6 14 3 9z" fill="#efb795" stroke="#8a4b30"/><path d="M4 3l6 6M7 3l5 6M3 6l6 6" stroke="#8a4b30" stroke-width=".8"/><path d="M12 17l5-4v4z" fill="#1b4fb0"/></svg></button>
        <button aria-label="Лупа"><svg viewBox="0 0 18 18"><use href="#lens"/></svg></button>
        <button aria-label="Рамка"><svg viewBox="0 0 18 18"><use href="#lens"/><path d="M1 1h15v15H1z" fill="none" stroke="#d00" stroke-width="1.500"/></svg></button>
        <button aria-label="Показать всё"><svg viewBox="0 0 18 18"><use href="#lens"/><path d="M5 5h6v6H5z" fill="#8ac8e8" stroke="#333" stroke-width="1.400"/></svg></button>
        <button aria-label="Обновить"><svg viewBox="0 0 18 18"><path d="M3 7.500a6 6 0 0 1 10-2.500M15 10.500a6 6 0 0 1-10 2.500" fill="none" stroke="#3db03a" stroke-width="2"/><path d="M15.500 3v5h-5zM2.500 15v-5h5z" fill="#3db03a"/></svg></button>
        <button aria-label="Во весь экран"><svg viewBox="0 0 18 18"><path d="M4.500 5.500h9v7h-9z" fill="#1593d8" stroke="#0b6fae"/><path d="M1 5V2h3M14 2h3v3M17 13v3h-3M4 16H1v-3" fill="none" stroke="#444" stroke-width="1.500"/></svg></button>
        <svg class="corner" viewBox="0 0 12 12"><path d="M9 1h2v2H9zM5 5h2v2H5zM9 5h2v2H9zM1 9h2v2H1zM5 9h2v2H5zM9 9h2v2H9z" fill="#222"/></svg>
      </div>
    </footer>
  </div>
</div>
</body>
</html>
```
FILE: styles.css
```css
* { box-sizing: border-box; }
body {
  margin: 0;
  background: #fff;
  font: 11px/14px "Liberation Sans", sans-serif;
  color: #000;
}
button { padding: 0; border: 0; background: none; font: inherit; color: inherit; }
a { color: inherit; text-decoration: none; }
h1, h2 { margin: 0; font-weight: normal; }
svg { display: block; flex: none; }
.defs { position: absolute; width: 0; height: 0; }

.window {
  display: flex;
  flex-direction: column;
  min-height: 100vh;
  padding: 0 6px 6px;
  border: 1px solid #1c1c1c;
  border-radius: 8px 8px 6px 6px;
  background: linear-gradient(#bdbdbd 0, #b8b4b2 208px, #85807e 212px, #989492 600px, #a8a8a8);
  box-shadow: inset 0 0 0 1px #dcdcdc;
}
.titlebar {
  display: flex;
  align-items: center;
  height: 27px;
  margin: 0 -5px;
  padding: 1px 5px 0 7px;
  border-radius: 7px 7px 0 0;
  background: linear-gradient(90deg, #c2c2c2, #b4b4b4 30%, #9d9d9d 45%, #a8a8a8 75%, #969696);
}
.logo { width: 16px; height: 16px; }
.titlebar h1 {
  margin-left: 6px;
  font: 12px/16px Roboto, sans-serif;
  text-shadow: 0 0 8px #fff, 0 0 8px #fff;
}
.winbtns {
  display: flex;
  align-self: flex-start;
  margin-left: auto;
  border: 1px solid #5a5a5a;
  border-top: 0;
  border-radius: 0 0 5px 5px;
  overflow: hidden;
}
.winbtns button {
  display: grid;
  place-items: center;
  width: 28px;
  height: 19px;
  border-right: 1px solid #5a5a5a;
  background: linear-gradient(#d0d0d0, #b4b4b4 45%, #8e8e8e 50%, #b0b0b0);
  box-shadow: inset 0 0 0 1px #d8d8d8;
}
.winbtns svg { width: 14px; height: 12px; }
.winbtns .close {
  width: 47px;
  border: 0;
  background: linear-gradient(#e3a393, #cf6a56 45%, #b72e16 50%, #cf5a3c);
  box-shadow: inset 0 0 0 1px #e3b5a8;
}

.app {
  flex: 1;
  display: flex;
  flex-direction: column;
  border: 1px solid #dedede;
  background: #525252;
}

.menu { display: flex; align-items: center; height: 28px; font: 11px/14px "Open Sans", sans-serif; color: #fff; }
.menu a { margin-right: 14px; }
.menu .grip { margin: 0 6px 0 1px; }
.grip {
  flex: none;
  width: 9px;
  height: 16px;
  background: radial-gradient(circle, #303030 1px, transparent 1px) 0 0 / 9px 4px;
}
.menu .grip { background-image: radial-gradient(circle, #ddd 1px, transparent 1px); }
.grip.h { width: 16px; height: 10px; background: radial-gradient(circle, #303030 1px, transparent 1px) 0 0 / 4px 10px; }

.bars { display: flex; flex-direction: column; gap: 1px; padding-right: 5px; }
.barrow { display: flex; gap: 1px; }
.bar {
  display: flex;
  align-items: center;
  height: 23px;
  border-radius: 3px;
  background: linear-gradient(#d4d7dc, #b6bbc4 50%, #9ba1ad);
}
.bar.grow { flex: 1; min-width: 0; }
.bar.end { padding-left: 1px; }
.bar button, .tools button {
  display: grid;
  place-items: center;
  flex: none;
  width: 21px;
  height: 21px;
}
.bar svg, .tools svg { width: 18px; height: 18px; }
.clip { width: 11px; }
.bar .clip svg { width: 10px; }
.sep { flex: none; width: 8px; height: 21px; background: linear-gradient(#fff, #fff) center / 1px 100% no-repeat; }
.sep.blank { background: none; }
.sep.h { width: 21px; height: 8px; background-size: 100% 1px; }
.bar .on, .ptools .on { border: 1px solid #e2a050; background: linear-gradient(#fcebd0, #f8cf90); }

.combo {
  display: flex;
  align-items: center;
  gap: 3px;
  min-width: 0;
  height: 21px;
  margin-right: 3px;
  padding: 0 4px;
  border: 1px solid #f4f4f4;
  border-top: 2px solid #6a6a6a;
  border-left: 2px solid #6a6a6a;
  border-radius: 0;
  background: #fff;
  white-space: nowrap;
  overflow: hidden;
}
.combo select, select.combo { appearance: none; font: inherit; color: #000; opacity: 1; }
.combo select { flex: 1; min-width: 0; padding: 0; border: 0; background: none; }
select.combo { flex: 1; }
select.off { background: #f0f0f0; }
.layer { gap: 2px; }
.wide { flex: 366; margin-left: 2px; }
.mid { flex: 144; }
.tail { flex: 50; margin-right: 0; }
.wide, .cell { gap: 2px; }
.bar .i-bulb, .i-bulb { width: 14px; height: 17px; }
.bar .i-sun, .i-sun { width: 16px; height: 16px; }
.bar .i-sw, .i-sw { width: 11px; height: 11px; }
.box { flex: none; width: 11px; height: 11px; border: 1px solid #000; background: #fff; }
.line { flex: none; width: 56px; height: 1px; background: #000; }

.work { flex: 1; display: flex; align-items: flex-start; }
.tools {
  display: flex;
  flex-direction: column;
  align-items: center;
  flex: none;
  width: 22px;
  margin-top: 24px;
  border-radius: 3px;
  background: linear-gradient(90deg, #d0d4da, #b6bbc4 50%, #9ba1ad);
}
.left { padding-bottom: 9px; background: linear-gradient(90deg, #d3d7dc, #b4bac3); }
.right { margin-left: 1px; margin-right: 2px; }
.center { flex: 1; align-self: stretch; display: flex; flex-direction: column; min-width: 0; }
.docks { flex: 1; display: flex; gap: 3px; }
.dock { flex: none; width: 224px; display: flex; flex-direction: column; }

.props {
  display: flex;
  flex-direction: column;
  height: 505px;
  border: 6px solid #fe0000;
  border-radius: 6px;
  background: #f0f0f0;
  box-shadow: 1px 2px 3px #222;
  overflow: hidden;
}
.props header {
  display: flex;
  align-items: center;
  flex: none;
  height: 16px;
  gap: 9px;
  padding-right: 3px;
  background: linear-gradient(90deg, #8d8d8d, #a8a8a8);
  color: #444;
}
.props h2 { flex: 1; font: 11px/14px "Open Sans", sans-serif; }
.i-pin { width: 8px; height: 9px; }
.i-x { width: 9px; height: 9px; }
.ptools {
  display: flex;
  align-items: center;
  flex: none;
  height: 26px;
  border-bottom: 1px solid #7c828c;
  background: linear-gradient(#d4d7dc, #b6bbc4 50%, #9499a5);
}
.ptools button { display: grid; place-items: center; width: 21px; height: 20px; }
.ptools svg { width: 18px; height: 18px; }
.ptools .on { width: 18px; }
.ptools .num { font: bold 15px/18px "Liberation Serif", serif; color: #1d4e94; }
.bsep { width: 1px; height: 12px; margin: 0 4px; background: #3f4a66; }
.pbody { flex: 1; display: flex; min-height: 0; }
.pbody .scroll { margin-right: 2px; }
.pview { flex: 1; min-width: 0; overflow: hidden; background: linear-gradient(90deg, #d8d8d8, #fff 8px); }
.props table { width: 100%; table-layout: fixed; border-collapse: separate; border-spacing: 0; }
.c-name { width: 102px; }
.props th, .props td {
  height: 22px;
  padding: 0 0 0 2px;
  border-bottom: 1px solid #6d6d6d;
  font-weight: normal;
  text-align: left;
  white-space: nowrap;
  overflow: hidden;
}
.props th { padding-left: 13px; border-right: 1px solid #6d6d6d; }
.props .obj th { padding-left: 4px; }
.props .grp th { height: 20px; padding: 0 4px 0 3px; border-right: 0; background: linear-gradient(#c8ccd3, #a9aeb8 60%, #989eaa); font-weight: bold; }
.grp div { display: flex; align-items: center; justify-content: space-between; }
.grp button {
  width: 9px;
  height: 9px;
  border: 1px solid #888;
  background: linear-gradient(#333, #333) center / 5px 1px no-repeat #eee;
}
.ro { background: #e3e3e3; }
.cell { display: flex; align-items: center; padding-left: 2px; }

.scroll { display: flex; flex: none; background: #f0f0f0; }
.scroll.v { flex-direction: column; width: 16px; }
.scroll.h { flex: 1; height: 16px; }
.arr { flex: none; width: 16px; height: 18px; background: #404040; clip-path: polygon(4px 11px, 8px 7px, 12px 11px); }
.down { clip-path: polygon(4px 7px, 8px 11px, 12px 7px); }
.lt, .rt { width: 20px; height: 16px; clip-path: polygon(12px 4px, 8px 8px, 12px 12px); }
.rt { clip-path: polygon(8px 4px, 12px 8px, 8px 12px); }
.track { flex: 1; display: flex; min-width: 0; }
.v .track { flex-direction: column; }
.thumb {
  flex: 1;
  display: grid;
  place-items: center;
  border: 1px solid #979797;
  border-radius: 2px;
  background: linear-gradient(90deg, #f4f4f4, #e4e4e4 50%, #cbcbcb 52%, #dadada);
}
.h .thumb { background: linear-gradient(#f4f4f4, #e4e4e4 50%, #cbcbcb 52%, #dadada); }
.short { flex: 0 0 87%; }
.ridge { width: 8px; height: 8px; background: repeating-linear-gradient(#555 0 1px, #fff 1px 2px, transparent 2px 3px); }
.h .ridge { background: repeating-linear-gradient(90deg, #555 0 1px, #fff 1px 2px, transparent 2px 3px); }

.dtabs { display: flex; align-items: flex-start; gap: 8px; padding-left: 10px; color: #fff; font: 11px/14px "Open Sans", sans-serif; }
.dtabs a { padding-top: 2px; }
.dtabs .cur { padding: 2px 5px; border-radius: 0 0 3px 3px; background: linear-gradient(#dfe6ea, #fff); color: #000; }

.mdi { flex: 1; min-width: 0; display: flex; flex-direction: column; border-right: 1px solid #ddd; }
.mtabs {
  display: flex;
  align-items: flex-end;
  justify-content: space-between;
  height: 22px;
  padding-right: 6px;
  border-top: 1px solid #777;
  background: linear-gradient(#989eac, #c3c7cf);
}
.mtab {
  display: flex;
  align-items: center;
  gap: 7px;
  height: 18px;
  padding: 0 4px 0 24px;
  background: #fff;
  clip-path: polygon(0 100%, 16px 0, 100% 0, 100% 100%);
  font: bold 12px/14px Roboto, sans-serif;
}
.drop { width: 10px; height: 5px; margin-bottom: 8px; background: #444; clip-path: polygon(0 0, 50% 100%, 100% 0); }
.doc { flex: 1; display: flex; flex-direction: column; padding: 2px 5px 3px 3px; background: #fff; box-shadow: inset 1px 1px 0 1px #8d8d8d; }
.view { flex: 1; display: flex; }
.canvas {
  flex: 1;
  min-width: 0;
  overflow: hidden;
  background:
    linear-gradient(90deg, #565656 1px, transparent 1px) 68px 0 / 75px 75px,
    linear-gradient(#565656 1px, transparent 1px) 0 36px / 75px 75px,
    linear-gradient(90deg, #343434 1px, transparent 1px) 8px 0 / 15px 15px,
    linear-gradient(#343434 1px, transparent 1px) 0 6px / 15px 15px,
    #0a0a0a;
}
.sheets { display: flex; height: 21px; background: #f0f0f0; border-top: 1px solid #ccc; }
.sheets > .arr { margin-top: 1px; }
.sheets nav { display: flex; }
.sheets nav a { display: grid; width: 30px; height: 17px; margin-right: -3px; }
.sheets nav a > * { grid-area: 1 / 1; }
.sheets nav svg { width: 100%; height: 17px; }
.sheets nav span { text-align: center; line-height: 16px; z-index: 1; font-size: 12px; }
.sheets nav .cur { width: 59px; font-weight: bold; }
.list { margin-left: 4px; padding-right: 4px; border-right: 2px solid #aaa; height: 19px; }
.list svg { width: 18px; height: 16px; }
.sheets .scroll { margin-top: 1px; }
.h > .arr { width: 18px; }
.sizer { width: 12px; height: 12px; margin: 6px 0 0 4px; }

.console { display: flex; height: 70px; margin: 5px 0 0 3px; border-top: 1px solid #999; background: #f0f0f0; }
.side {
  display: flex;
  flex-direction: column;
  align-items: center;
  gap: 4px;
  width: 18px;
  padding-top: 4px;
  background: #a2a2a2;
  color: #444;
}
.side span { writing-mode: vertical-rl; transform: rotate(180deg); font: 11px/14px "Open Sans", sans-serif; }
.turn { transform: rotate(90deg); }
.cbody { flex: 1; min-width: 0; display: flex; flex-direction: column; }
.log { flex: 1; display: flex; min-height: 0; border-bottom: 1px solid #777; }
pre { flex: 1; min-width: 0; margin: 0; padding: 9px 0 0 2px; overflow: hidden; font: 12px/14px "DejaVu Sans Mono", monospace; }
.log .scroll { margin-right: 3px; }
.cmd { display: flex; align-items: center; height: 17px; padding-left: 2px; background: #fff; font: 12px/14px "DejaVu Sans Mono", monospace; }
.cmd input { flex: 1; border: 0; padding: 0; outline: 0; font: inherit; }

.status {
  display: flex;
  align-items: center;
  height: 25px;
  background: linear-gradient(#3c4352, #2c2d31 45%, #1f1f20);
  color: #fff;
  font: 11px/14px "Open Sans", sans-serif;
}
.status output { width: 214px; padding-left: 3px; }
.modes { display: flex; gap: 1px; height: 20px; padding-right: 3px; border-right: 1px solid #666; color: #222; }
.modes button {
  padding: 0 3px;
  border: 1px solid #c98a45;
  background: linear-gradient(#fcd7a6, #fbc27c 50%, #f9b255 55%, #fdd48c);
  font: 11px/14px Roboto, sans-serif;
}
.viewbar {
  display: flex;
  align-items: center;
  gap: 2px;
  height: 25px;
  margin-left: auto;
  padding-left: 7px;
  border-left: 1px solid #ddd;
  background: linear-gradient(#c2c2c2, #8f8f8f 50%, #707070);
  color: #000;
}
.viewbar button {
  display: grid;
  place-items: center;
  width: 20px;
  height: 20px;
  border-radius: 2px;
  background: linear-gradient(#fff, #e7edf3 50%, #fff);
}
.viewbar button svg { width: 18px; height: 18px; }
.viewbar .shade { background: #cfe0ea; }
.viewbar .scale { width: 88px; }
.corner { width: 12px; height: 12px; margin: 9px 1px 0 5px; }
```
